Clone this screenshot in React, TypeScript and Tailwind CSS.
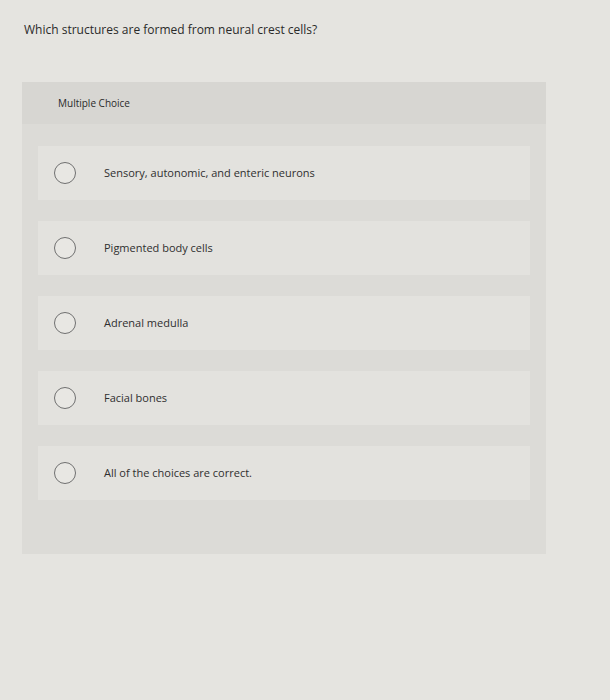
const choices = [
  "Sensory, autonomic, and enteric neurons",
  "Pigmented body cells",
  "Adrenal medulla",
  "Facial bones",
  "All of the choices are correct.",
];

export default function App() {
  return (
    <div
      className="min-h-[700px] w-[610px] bg-[#e5e4e0] pt-[22px] text-[#2a2a2a]"
      style={{ fontFamily: "'Open Sans', Lato, sans-serif" }}
    >
      <p className="pl-[24px] text-[12px] leading-[16px]">Which structures are formed from neural crest cells?</p>

      <div className="ml-[22px] mt-[44px] w-[524px] bg-[#dcdbd7] pb-[54px]">
        <div className="flex h-[42px] items-center bg-[#d7d6d2] pl-[36px] text-[10px]">Multiple Choice</div>

        <div className="mx-[16px] mt-[22px] flex flex-col gap-[21px]">
          {choices.map((choice, index) => (
            <label
              key={`choice-${index}`}
              className="flex h-[54px] cursor-pointer items-center bg-[#e3e2de]"
            >
              <span className="ml-[16px] h-[22px] w-[22px] shrink-0 rounded-full border-[1.5px] border-[#707070] bg-[#e8e7e3]" />
              <span className="ml-[28px] text-[11px] text-[#2f2f2f]">{choice}</span>
            </label>
          ))}
        </div>
      </div>
    </div>
  );
}
